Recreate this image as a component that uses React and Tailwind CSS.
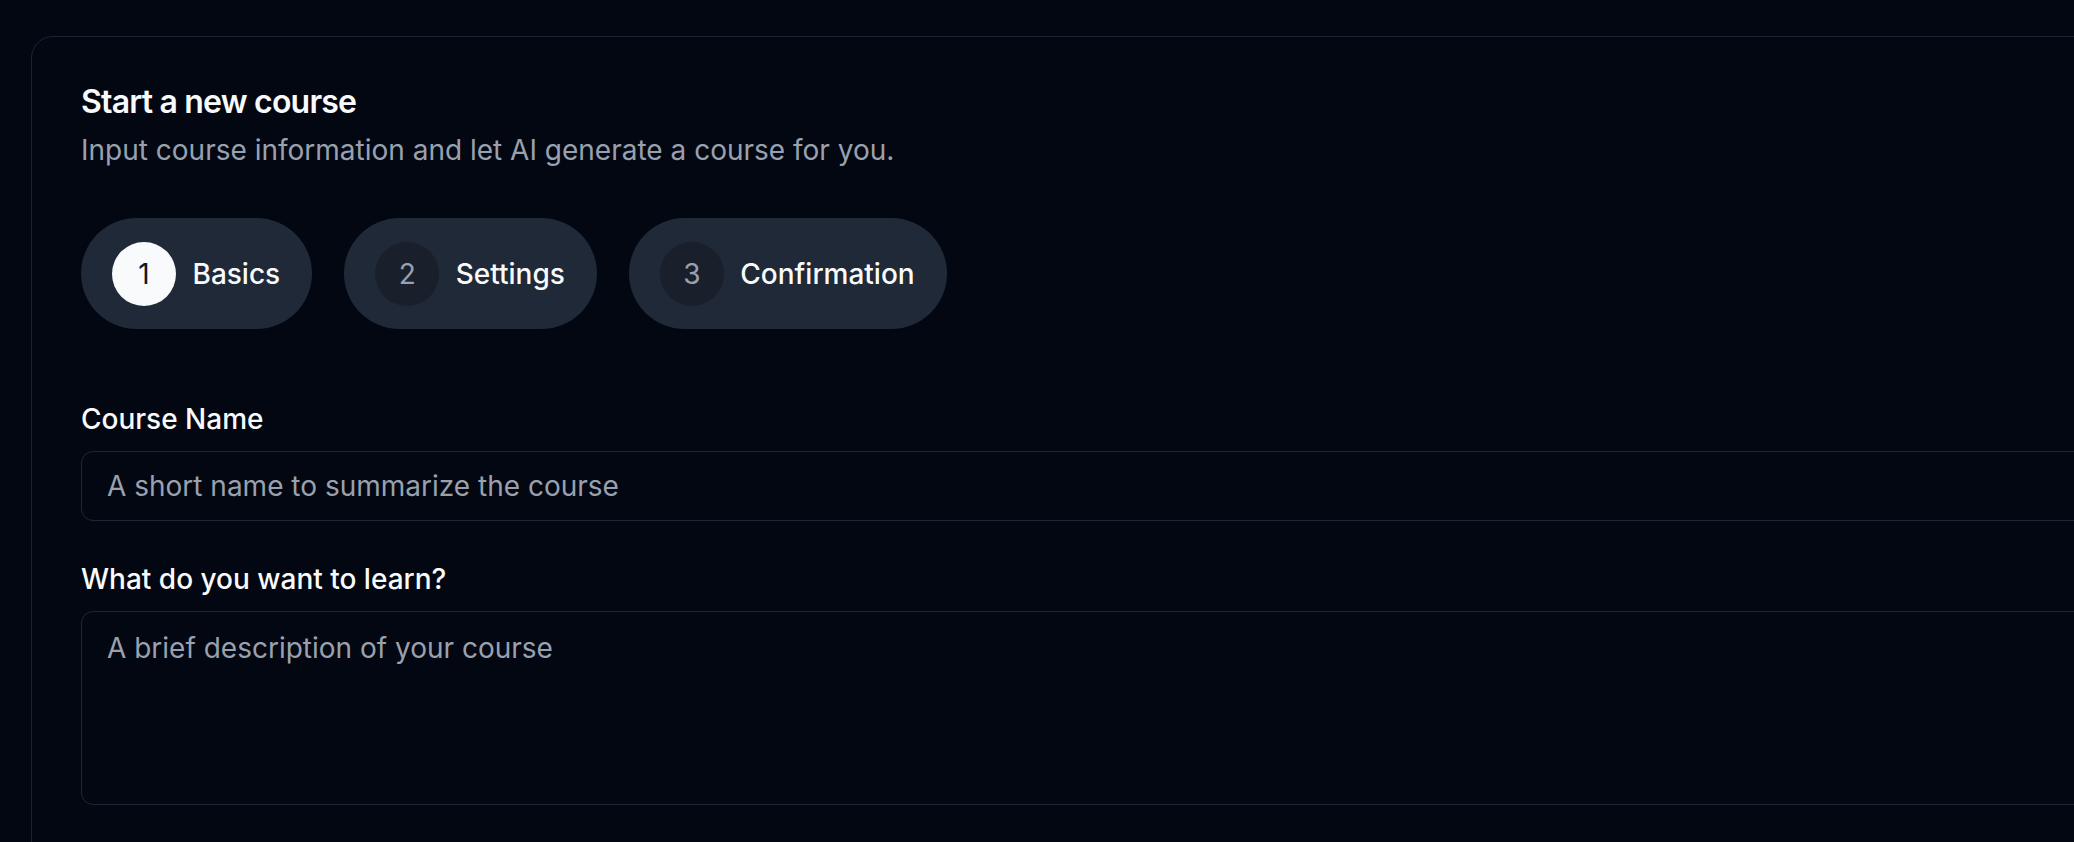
import React from 'react';

const steps = [
  { n: 1, label: 'Basics', active: true },
  { n: 2, label: 'Settings', active: false },
  { n: 3, label: 'Confirmation', active: false },
];

const StepPill = ({ n, label, active }) => (
  <div className="flex items-center gap-[16.5px] rounded-full bg-[#1f2937] pl-[31px] pr-[32px] py-[23.5px]">
    <div
      className={`w-[64px] h-[64px] rounded-full flex items-center justify-center text-[28px] leading-none ${
        active ? 'bg-[#f8fafc] text-[#111827]' : 'bg-[#19202b] text-gray-400'
      }`}
    >
      {n}
    </div>
    <span className="text-[28px] leading-none font-medium text-gray-50">{label}</span>
  </div>
);

const App = () => {
  return (
    <div className="min-h-screen w-full overflow-hidden bg-[#030712] pt-[36px] pl-[31px]" style={{ fontFamily: 'Inter, "Noto Sans", sans-serif' }}>
      <div className="w-[2300px] min-h-[900px] rounded-[22px] border border-[#1c2331] bg-[#030712] pt-[47px] px-[49px]">
        {/* header */}
        <h1 className="text-[32px] leading-[36px] font-semibold tracking-[-0.025em] text-gray-50">Start a new course</h1>
        <p className="mt-[12px] text-[28px] leading-[36px] text-gray-400">
          Input course information and let AI generate a course for you.
        </p>

        {/* stepper */}
        <div className="mt-[50px] flex gap-[32px]">
          {steps.map(s => (
            <StepPill key={s.n} {...s} />
          ))}
        </div>

        {/* form */}
        <form className="mt-[76px]" onSubmit={e => e.preventDefault()}>
          <label className="block text-[28px] leading-none font-medium text-gray-50">Course Name</label>
          <input
            type="text"
            placeholder="A short name to summarize the course"
            className="mt-[17.5px] block w-full h-[70px] rounded-[12px] border border-[#1f2633] bg-transparent px-[25px] text-[28px] text-gray-50 placeholder:text-gray-400 outline-none"
          />

          <label className="mt-[44px] block text-[28px] leading-none font-medium text-gray-50">What do you want to learn?</label>
          <textarea
            placeholder="A brief description of your course"
            className="mt-[18px] block w-full h-[194px] resize-none rounded-[12px] border border-[#1f2633] bg-transparent px-[25px] py-[16px] text-[28px] leading-[40px] text-gray-50 placeholder:text-gray-400 outline-none"
          />
        </form>
      </div>
    </div>
  );
};

export default App;
